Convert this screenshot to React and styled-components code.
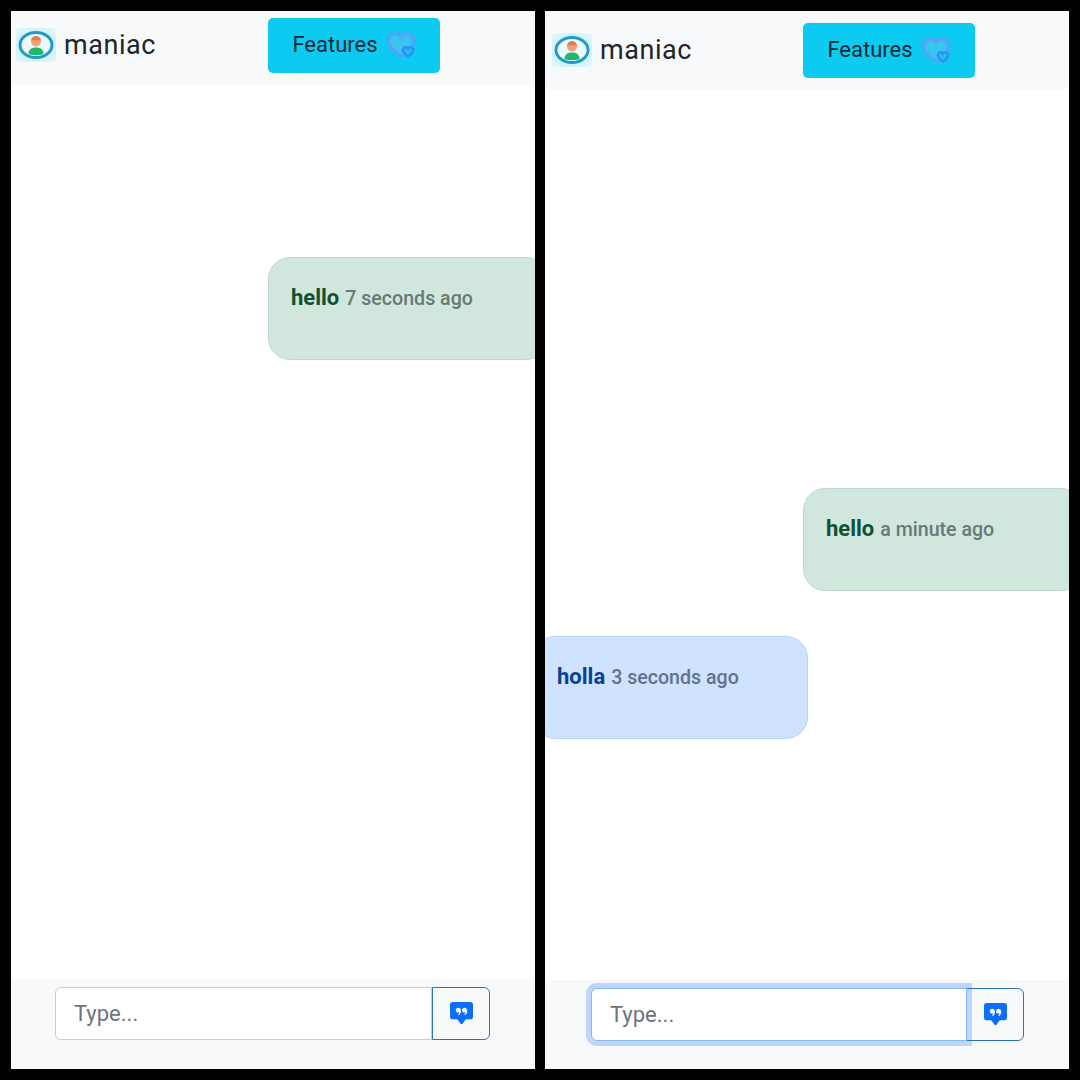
import React from "react";
import styled, { createGlobalStyle } from "styled-components";
import { BsChatSquareQuoteFill } from "react-icons/bs";

const Global = createGlobalStyle`
  html, body { margin: 0; padding: 0; background: #000; }
  * { box-sizing: border-box; }
`;

const Screen = styled.div`
  width: 1080px;
  height: 1080px;
  padding: 11px;
  background: #000;
  display: grid;
  grid-template-columns: 524px 524px;
  column-gap: 10px;
  font-family: Roboto, "Liberation Sans", sans-serif;
`;

const Phone = styled.div`
  display: flex;
  flex-direction: column;
  height: 1058px;
  background: #fff;
  overflow: hidden;
`;

const Header = styled.header`
  display: flex;
  align-items: flex-start;
  height: ${(p) => p.$height}px;
  padding-top: ${(p) => p.$top}px;
  background: #f8f9fa;
  flex: none;
`;

const Brand = styled.div`
  display: flex;
  align-items: center;
  width: ${(p) => p.$width}px;
  height: 54px;
  padding-left: ${(p) => p.$left}px;
  color: #212529;
  font-size: 27px;
  letter-spacing: 0.55px;
`;

const BrandName = styled.span`
  margin-bottom: 1px;
`;

const Logo = styled.span`
  display: flex;
  align-items: center;
  justify-content: center;
  width: 40px;
  height: 34px;
  margin-right: 8px;
  background: radial-gradient(ellipse at center, #c9f0fa 55%, #eef8fb 100%);
`;

const FeatureButton = styled.div`
  display: flex;
  align-items: center;
  justify-content: center;
  gap: 8px;
  width: 172px;
  height: 55px;
  padding-bottom: 2px;
  border-radius: 5px;
  background: #0dcaf0;
  color: #0b2a3a;
  font-size: 22px;
`;

const Chat = styled.main`
  flex: 1;
  display: flex;
  flex-direction: column;
  padding-top: ${(p) => p.$top}px;
  gap: 45px;
`;

const Bubble = styled.div`
  display: flex;
  align-items: baseline;
  gap: 6px;
  height: 103px;
  width: ${(p) => p.$width}px;
  margin-left: ${(p) => p.$left}px;
  padding: 27px 0 0 ${(p) => p.$pad}px;
  border-radius: 22px;
  border: 1.5px solid ${(p) => (p.$tone === "green" ? "#badbcc" : "#b6d4fe")};
  background: ${(p) => (p.$tone === "green" ? "#d1e7dd" : "#cfe2ff")};
`;

const Message = styled.strong`
  font-size: 22px;
  font-weight: 700;
  color: ${(p) => (p.$tone === "green" ? "#0f5132" : "#084298")};
`;

const Time = styled.span`
  font-size: 19.6px;
  font-weight: 500;
  color: ${(p) => (p.$tone === "green" ? "#667a78" : "#61728f")};
`;

const Footer = styled.footer`
  flex: none;
  height: ${(p) => p.$height}px;
  padding: 8px 0 0 ${(p) => p.$left}px;
  background: #f8f9fa;
`;

const InputGroup = styled.div`
  display: flex;
  height: 53px;
`;

const Field = styled.div`
  position: relative;
  z-index: 1;
  display: flex;
  align-items: center;
  width: ${(p) => (p.$focus ? 376 : 377)}px;
  height: 53px;
  padding-left: 18px;
  background: #fff;
  color: #6c757d;
  font-size: 22px;
  border-radius: 6px 0 0 6px;
  border: 1.5px solid ${(p) => (p.$focus ? "#86b7fe" : "#c8ced4")};
  box-shadow: ${(p) => (p.$focus ? "0 0 0 5px rgba(13,110,253,.25)" : "none")};
`;

const SendButton = styled.div`
  display: flex;
  align-items: center;
  justify-content: center;
  width: 58px;
  height: 53px;
  margin-left: ${(p) => (p.$focus ? -1 : 0)}px;
  border: 1.5px solid #2a74bd;
  border-radius: 0 6px 6px 0;
  color: #0d6efd;
  font-size: 23px;
`;

const Avatar = () => (
  <svg width="36" height="30" viewBox="0 0 36 30" aria-hidden="true">
    <ellipse cx="18" cy="15" rx="16" ry="12.5" fill="#eef9fc" stroke="#1e9bc7" strokeWidth="3" />
    <path d="M10.500 24c0-4.500 3.200-6.500 7.500-6.500s7.500 2 7.500 6.500c-2 .8-4.800 1.200-7.500 1.200s-5.500-.4-7.500-1.200z" fill="#1fb76b" />
    <circle cx="18" cy="11.500" r="5" fill="#f0a07c" />
    <path d="M13 10.500c.3-3 2.500-4.500 5-4.500s4.700 1.500 5 4.500c-3 0-7-.4-10 0z" fill="#e2794f" />
  </svg>
);

const Hearts = () => (
  <svg width="30" height="28" viewBox="0 0 30 28" fill="none" aria-hidden="true">
    <path
      d="M15 25C7 19.500 2.500 15 2.500 9.500 2.500 5 5.800 2.800 8.800 2.800c2.700 0 4.900 1.300 6.200 3.800 1.300-2.500 3.500-3.800 6.200-3.800 3.300 0 6.300 2.200 6.300 6.700 0 1.500-.4 2.900-1.100 4.200"
      stroke="#5b9ff8"
      strokeWidth="3.200"
      strokeLinecap="round"
      fill="#7fc4f7"
      fillOpacity="0.35"
    />
    <path
      d="M22 25.500c-3-2-5.200-3.800-5.200-6.200 0-1.800 1.400-3 2.900-3 1 0 1.800.5 2.300 1.400.5-.9 1.300-1.400 2.300-1.400 1.500 0 2.900 1.200 2.900 3 0 2.400-2.200 4.200-5.200 6.200z"
      stroke="#3f87f5"
      strokeWidth="2.600"
      fill="#0dcaf0"
    />
  </svg>
);

const Pane = ({ headerHeight, headerTop, brandLeft, brandWidth, chatTop, footerHeight, footerLeft, focus, children }) => (
  <Phone>
    <Header $height={headerHeight} $top={headerTop}>
      <Brand $left={brandLeft} $width={brandWidth}>
        <Logo>
          <Avatar />
        </Logo>
        <BrandName>maniac</BrandName>
      </Brand>
      <FeatureButton>
        Features
        <Hearts />
      </FeatureButton>
    </Header>
    <Chat $top={chatTop}>{children}</Chat>
    <Footer $height={footerHeight} $left={footerLeft}>
      <InputGroup>
        <Field $focus={focus}>Type...</Field>
        <SendButton $focus={focus}>
          <BsChatSquareQuoteFill />
        </SendButton>
      </InputGroup>
    </Footer>
  </Phone>
);

export default function App() {
  return (
    <>
      <Global />
      <Screen>
        <Pane headerHeight={74} headerTop={7} brandLeft={5} brandWidth={257} chatTop={172} footerHeight={90} footerLeft={44}>
          <Bubble $tone="green" $left={257} $width={280} $pad={22}>
            <Message $tone="green">hello</Message>
            <Time $tone="green">7 seconds ago</Time>
          </Bubble>
        </Pane>
        <Pane headerHeight={78} headerTop={12} brandLeft={7} brandWidth={258} chatTop={399} footerHeight={89} footerLeft={46} focus>
          <Bubble $tone="green" $left={258} $width={280} $pad={22}>
            <Message $tone="green">hello</Message>
            <Time $tone="green">a minute ago</Time>
          </Bubble>
          <Bubble $tone="blue" $left={-12} $width={275} $pad={23}>
            <Message $tone="blue">holla</Message>
            <Time $tone="blue">3 seconds ago</Time>
          </Bubble>
        </Pane>
      </Screen>
    </>
  );
}
